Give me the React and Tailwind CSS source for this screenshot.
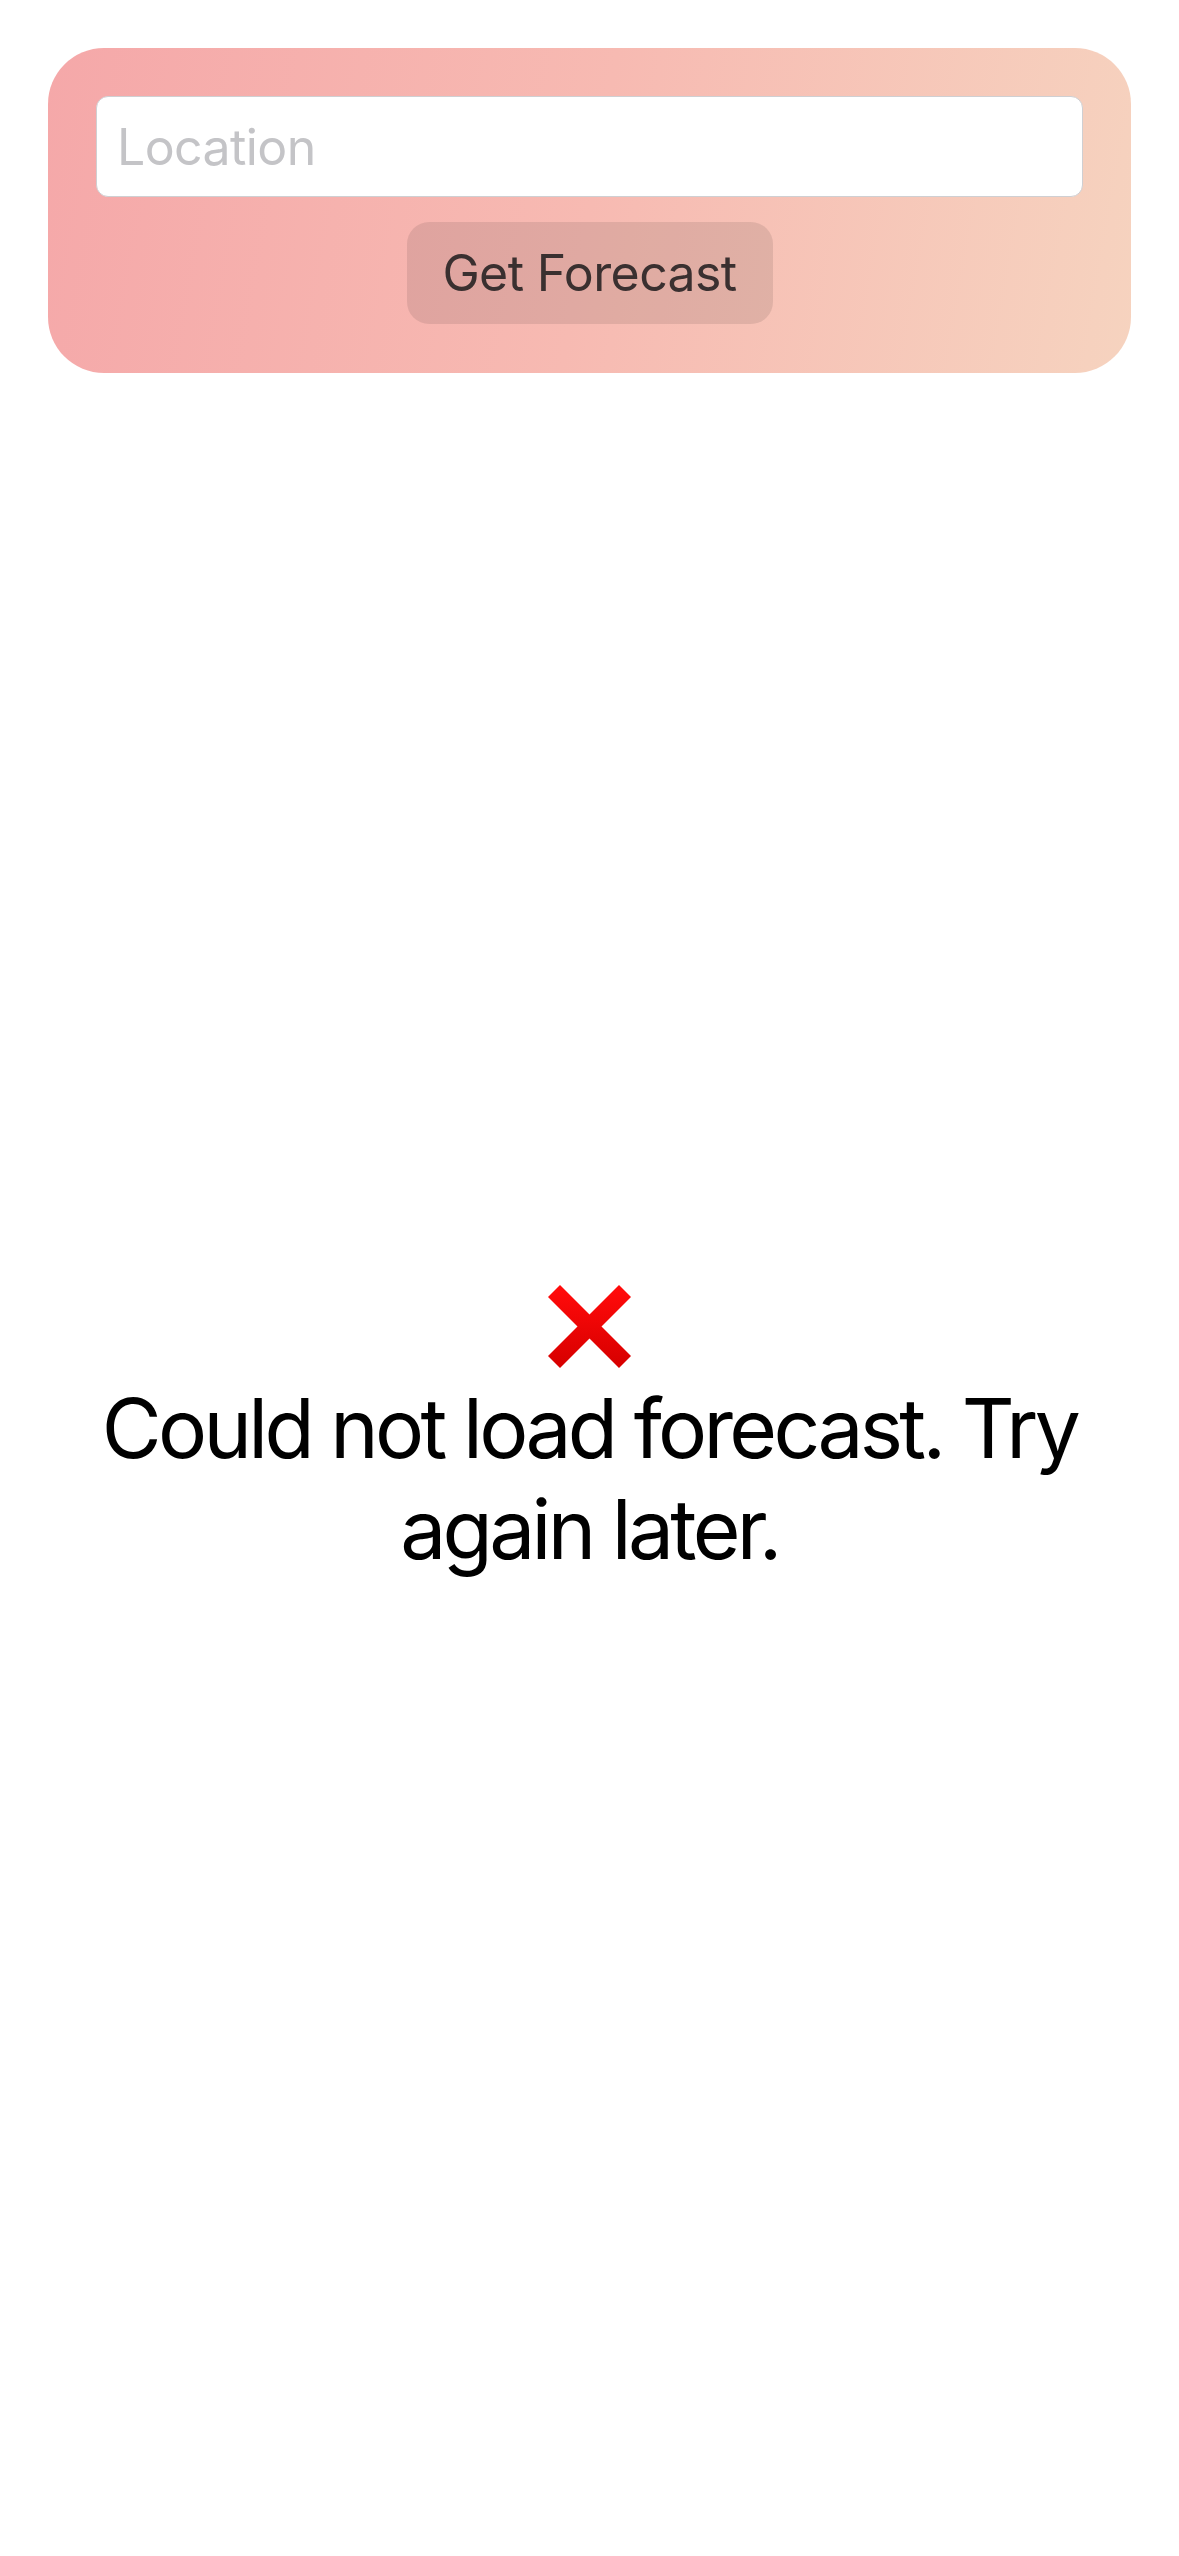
import { useState } from "react";

/* ─── Red cross mark (emoji-style) ──────────────────────────────────────── */
function CrossMark() {
  return (
    <svg width="83" height="83" viewBox="0 0 83 83" aria-hidden="true">
      <defs>
        <linearGradient id="xg" x1="0" y1="0" x2="0" y2="1">
          <stop offset="0" stopColor="#ff0a0a" />
          <stop offset="1" stopColor="#d90000" />
        </linearGradient>
      </defs>
      <g stroke="url(#xg)" strokeWidth="17" strokeLinecap="butt">
        <line x1="6" y1="6" x2="77" y2="77" />
        <line x1="77" y1="6" x2="6" y2="77" />
      </g>
    </svg>
  );
}

export default function App() {
  const [location, setLocation] = useState("");

  return (
    <div
      className="flex h-[2556px] w-full flex-col bg-white"
      style={{ fontFamily: "Inter, 'Noto Sans', sans-serif" }}
    >
      {/* ── Search card ──────────────────────────────────────────── */}
      <div className="px-[48px] pt-[48px]">
        <div className="flex flex-col items-center gap-[25px] rounded-[56px] bg-[linear-gradient(100deg,#f5a8a9_0%,#f7bab2_50%,#f6d3bf_100%)] px-[48px] pt-[48px] pb-[49px]">
          <input
            type="text"
            value={location}
            onChange={(e) => setLocation(e.target.value)}
            placeholder="Location"
            className="h-[101px] w-full rounded-[12px] border border-[#cfcfd2] bg-white px-[20px] text-[50px] tracking-[-0.012em] text-black placeholder:text-[#c4c4c7] focus:outline-none"
          />
          <button className="h-[102px] w-[366px] rounded-[22px] bg-black/[0.09] text-[50px] tracking-[-0.012em] text-[#3a3030]">
            Get Forecast
          </button>
        </div>
      </div>

      {/* ── Error state ──────────────────────────────────────────── */}
      <div className="flex flex-1 flex-col items-center justify-center px-[40px] pb-[64px]">
        <CrossMark />
        <p className="mt-[10px] text-center text-[82px] leading-[101px] tracking-[-0.045em] text-black">
          Could not load forecast. Try again later.
        </p>
      </div>
    </div>
  );
}
